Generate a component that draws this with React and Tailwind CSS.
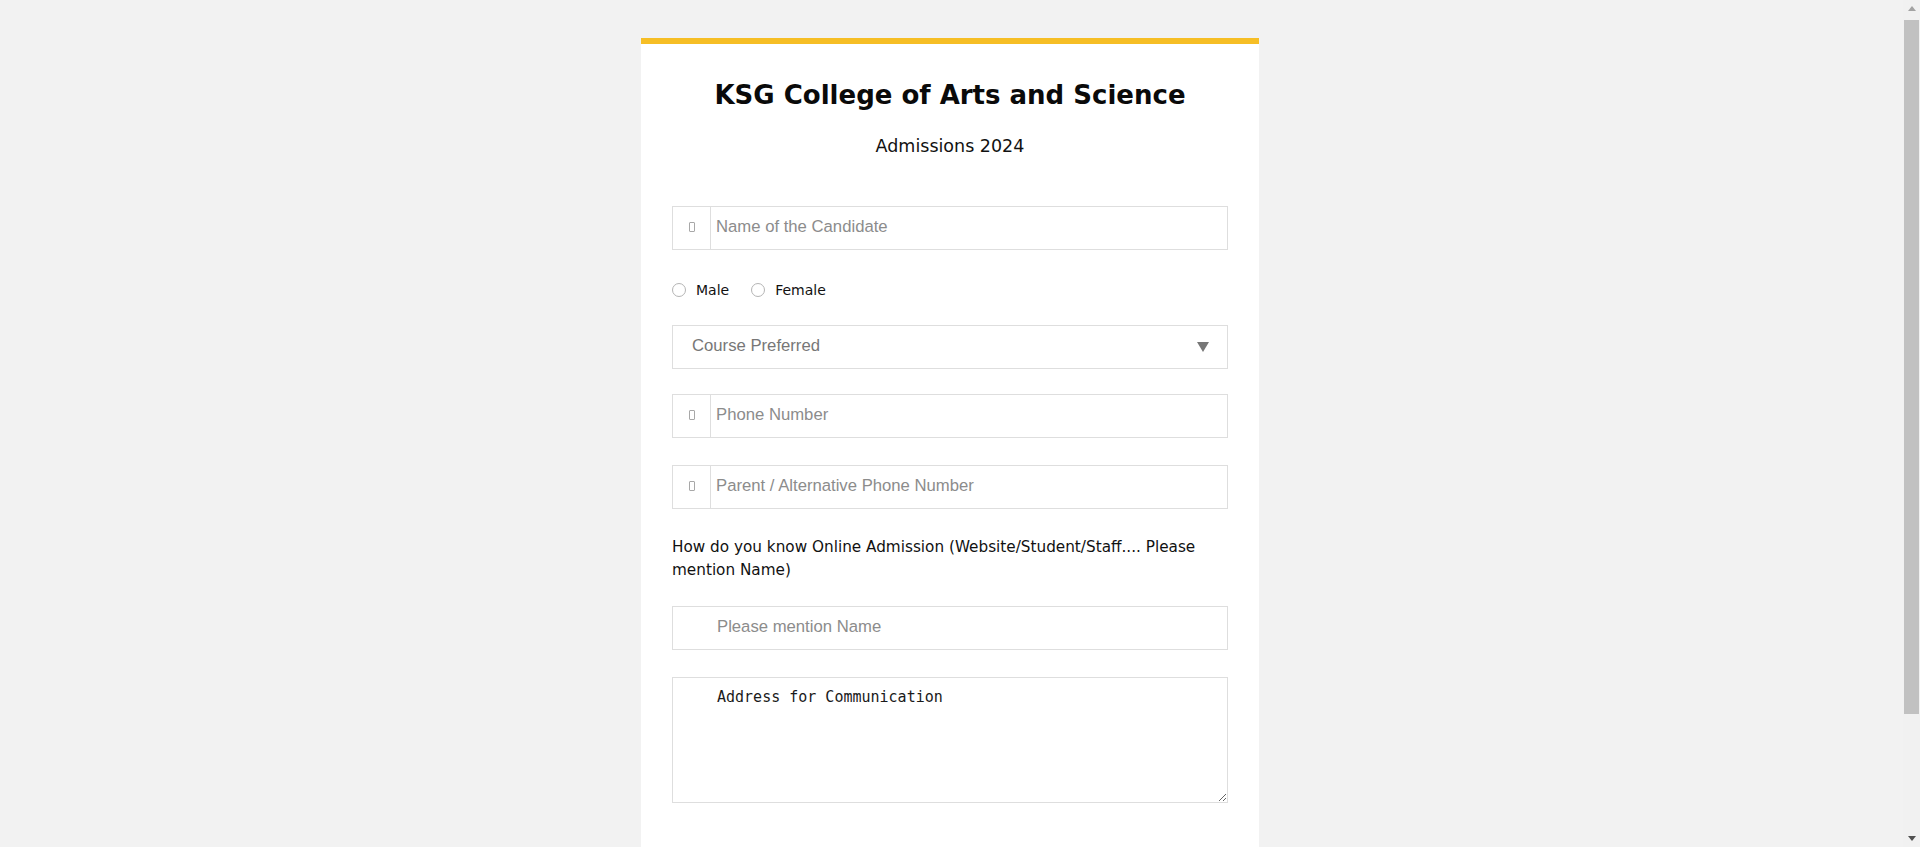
import { clsx } from 'clsx'

const sans = { fontFamily: '"DejaVu Sans", Verdana, sans-serif' }

function Tofu() {
  return <span className="block w-[6px] h-[10px] border border-[#a8a8a8] rounded-[1px]" />
}

function IconInput({ placeholder, className }) {
  return (
    <div className={clsx('flex h-[44px] border border-[#dedede] bg-white', className)}>
      <div className="w-[38px] shrink-0 flex items-center justify-center border-r border-[#dedede] pb-[3px]">
        <Tofu />
      </div>
      <input
        type="text"
        placeholder={placeholder}
        className="flex-1 min-w-0 pl-[5px] pr-3 pb-[2px] outline-none bg-transparent text-[16.7px] text-[#333] placeholder:text-[#8c8c8c] font-['Liberation_Sans',Arial,sans-serif]"
      />
    </div>
  )
}

function Radio({ label }) {
  return (
    <label className="flex items-center gap-[10px] cursor-pointer">
      <input
        type="radio"
        name="gender"
        className="appearance-none w-[14px] h-[14px] rounded-full border border-[#b4b4b4] bg-white m-0"
      />
      <span className="text-[14px] leading-[20px] text-[#111]" style={sans}>{label}</span>
    </label>
  )
}

// classic scrollbar on the right edge of the window
function Scrollbar() {
  return (
    <div className="fixed right-0 top-0 h-screen w-[17px] bg-[#f1f1f1] flex flex-col items-center">
      <div className="h-[17px] flex items-center justify-center">
        <svg width="8" height="5" viewBox="0 0 8 5"><path d="M4 0L8 5H0z" fill="#a3a3a3" /></svg>
      </div>
      <div className="mt-[3px] h-[694px] w-[15px] bg-[#c1c1c1]" />
      <div className="mt-auto h-[17px] flex items-center justify-center">
        <svg width="8" height="5" viewBox="0 0 8 5"><path d="M0 0h8L4 5z" fill="#505050" /></svg>
      </div>
    </div>
  )
}

export default function App() {
  return (
    <div className="min-h-screen bg-[#f2f2f2] pt-[38px] pb-[40px] pr-[20px]">
      <div className="mx-auto w-[618px] bg-white border-t-[6px] border-[#f6be25] px-[31px] pt-[36px] pb-[147px]">
        <h1 className="text-center text-[26px] leading-[30px] font-bold text-[#0a0a0a]" style={sans}>
          KSG College of Arts and Science
        </h1>
        <p className="mt-[26px] text-center text-[17.5px] leading-[20px] text-[#111]" style={sans}>
          Admissions 2024
        </p>

        <form className="flex flex-col" onSubmit={(e) => e.preventDefault()}>
          <IconInput placeholder="Name of the Candidate" className="mt-[50px]" />

          <div className="mt-[30px] h-[20px] flex items-center gap-[22px]">
            <Radio label="Male" />
            <Radio label="Female" />
          </div>

          <div className="relative mt-[25px] h-[44px] border border-[#dedede]">
            <select
              defaultValue=""
              className="appearance-none w-full h-full pl-[19px] pr-10 pb-[2px] bg-white outline-none text-[16.7px] text-[#777] font-['Liberation_Sans',Arial,sans-serif]"
            >
              <option value="" disabled>Course Preferred</option>
              <option>B.Sc Computer Science</option>
              <option>B.Com</option>
              <option>BBA</option>
            </select>
            <svg className="absolute right-[18px] top-[16px] pointer-events-none" width="12" height="10" viewBox="0 0 12 10">
              <path d="M0 0h12L6 10z" fill="#777" />
            </svg>
          </div>

          <IconInput placeholder="Phone Number" className="mt-[25px]" />
          <IconInput placeholder="Parent / Alternative Phone Number" className="mt-[27px]" />

          <p className="mt-[27px] text-[15.25px] leading-[23px] text-[#111]" style={sans}>
            How do you know Online Admission (Website/Student/Staff.... Please mention Name)
          </p>

          <input
            type="text"
            placeholder="Please mention Name"
            className="mt-[24px] h-[44px] border border-[#dedede] pl-[44px] pr-3 pb-[2px] outline-none text-[16.7px] text-[#333] placeholder:text-[#8c8c8c] font-['Liberation_Sans',Arial,sans-serif]"
          />

          <textarea
            defaultValue="Address for Communication"
            className="mt-[27px] h-[126px] border border-[#dedede] pl-[44px] pr-3 pt-[10px] outline-none text-[15px] leading-[18px] text-[#1a1a1a] font-['DejaVu_Sans_Mono',monospace]"
          />
        </form>
      </div>
      <Scrollbar />
    </div>
  )
}
